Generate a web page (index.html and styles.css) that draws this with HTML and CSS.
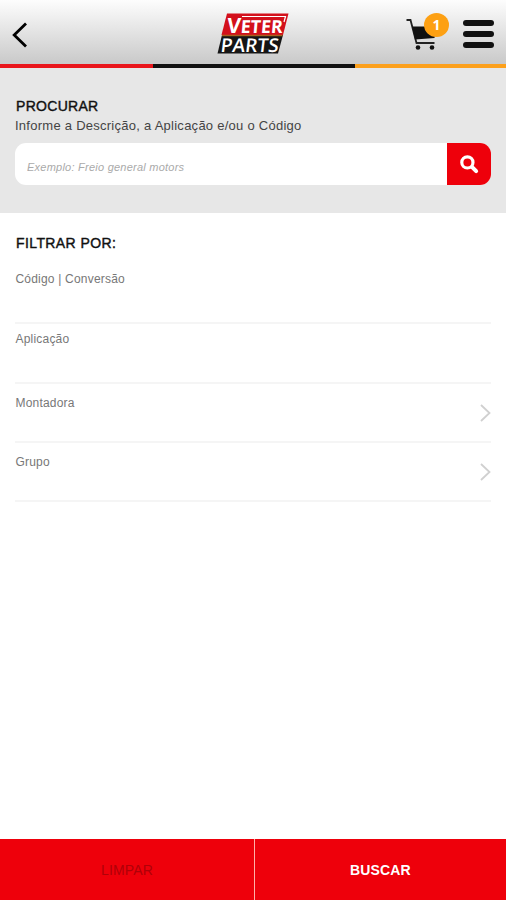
FILE: index.html
```html
<!DOCTYPE html>
<html lang="pt-BR">
<head>
    <meta charset="UTF-8">
    <meta name="viewport" content="width=device-width, initial-scale=1.0">
    <title>Veter Parts</title>
    <link rel="stylesheet" href="styles.css">
</head>
<body>
    <header class="topbar">
        <button type="button" class="back" aria-label="Voltar">
            <svg width="18" height="28" viewBox="0 0 18 28">
                <path d="M15 2.500L3.200 14L15 25.500" fill="none" stroke="#000" stroke-width="2.800"/>
            </svg>
        </button>
        <svg class="logo" width="72" height="42" viewBox="0 0 72 42">
            <path d="M10 0.500H71.500L66 22H4.500Z" fill="#d3101b"/>
            <path d="M5 22H66L61 40.500H0.500Z" fill="#151515"/>
            <path d="M5 22.500H65.500" stroke="#a8601c" stroke-width="1.500"/>
            <path d="M25 3.500H68.500L67 9" fill="none" stroke="#fff" stroke-width="1.200"/>
            <text class="logo-veter" transform="translate(9.500 19.500) skewX(-5)" font-size="18"><tspan font-size="21">V</tspan><tspan textLength="42" lengthAdjust="spacingAndGlyphs">ETER</tspan></text>
            <text class="logo-parts" transform="translate(3 38.500) skewX(-7)" font-size="19" textLength="58" lengthAdjust="spacingAndGlyphs">PARTS</text>
        </svg>
        <div class="actions">
            <button type="button" class="cart" aria-label="Carrinho">
                <svg width="32" height="32" viewBox="0 0 32 32">
                    <path d="M0.500 2H4.500L10.500 25H28.500" fill="none" stroke="#222" stroke-width="1.800"/>
                    <path d="M6 8.500H30L28.500 20L9 21.500Z" fill="#111"/>
                    <circle cx="12" cy="29.500" r="2.300" fill="#111"/>
                    <circle cx="26" cy="29.500" r="2.300" fill="#111"/>
                </svg>
                <span class="badge">1</span>
            </button>
            <button type="button" class="menu" aria-label="Menu">
                <span></span>
                <span></span>
                <span></span>
            </button>
        </div>
    </header>
    <div class="stripes">
        <span class="red"></span>
        <span class="black"></span>
        <span class="orange"></span>
    </div>

    <section class="search">
        <h1>PROCURAR</h1>
        <p>Informe a Descrição, a Aplicação e/ou o Código</p>
        <form class="search-box">
            <input type="text" placeholder="Exemplo: Freio general motors">
            <button type="button" aria-label="Pesquisar">
                <svg width="19" height="19" viewBox="0 0 18 18">
                    <circle cx="7" cy="7" r="5.300" fill="none" stroke="#fff" stroke-width="3"/>
                    <path d="M11.500 11.500L15.300 15.300" stroke="#fff" stroke-width="3.800" stroke-linecap="round"/>
                </svg>
            </button>
        </form>
    </section>

    <section class="filters">
        <h2>FILTRAR POR:</h2>
        <div class="filter codigo">Código | Conversão</div>
        <div class="filter aplicacao">Aplicação</div>
        <div class="filter montadora">
            <span>Montadora</span>
            <svg width="11" height="18" viewBox="0 0 11 18">
                <path d="M1 1L9.500 9L1 17" fill="none" stroke="#d0d0d0" stroke-width="1.800"/>
            </svg>
        </div>
        <div class="filter grupo">
            <span>Grupo</span>
            <svg width="11" height="18" viewBox="0 0 11 18">
                <path d="M1 1L9.500 9L1 17" fill="none" stroke="#d0d0d0" stroke-width="1.800"/>
            </svg>
        </div>
    </section>

    <footer class="bottom">
        <button type="button" class="clear">LIMPAR</button>
        <button type="button" class="submit">BUSCAR</button>
    </footer>
</body>
</html>
```

FILE: styles.css
```css
* {
    box-sizing: border-box;
}
body {
    margin: 0;
    height: 900px;
    display: flex;
    flex-direction: column;
    overflow: hidden;
    background: #fff;
    font-family: "Liberation Sans", Arial, sans-serif;
}
button {
    padding: 0;
    border: 0;
    background: none;
    font-family: inherit;
}
svg {
    display: block;
    overflow: visible;
}
.topbar {
    display: grid;
    grid-template-columns: 1fr 72px 1fr;
    height: 64px;
    padding: 0 12px 0 11px;
    background: linear-gradient(#fdfdfd, #c9c9c9);
}
.back {
    justify-self: start;
    align-self: start;
    margin-top: 21px;
}
.logo {
    margin-top: 13px;
}
.logo-veter {
    fill: #fff;
    font-family: "Open Sans", sans-serif;
    font-weight: bold;
}
.logo-parts {
    fill: #fff;
    font-family: "Open Sans", sans-serif;
    font-weight: 600;
}
.actions {
    display: flex;
    justify-content: flex-end;
    align-items: flex-start;
    gap: 25px;
}
.cart {
    position: relative;
    margin-top: 18px;
}
.badge {
    position: absolute;
    top: -5px;
    left: 18px;
    width: 25px;
    height: 24px;
    border-radius: 50%;
    background: #fda013;
    color: #fff;
    font: bold 14px/24px "Open Sans", sans-serif;
    text-align: center;
}
.menu {
    display: flex;
    flex-direction: column;
    gap: 5px;
    width: 31px;
    margin-top: 20px;
}
.menu span {
    height: 6px;
    border-radius: 3px;
    background: #111;
}
.stripes {
    display: grid;
    grid-template-columns: 153px 202px 1fr;
    height: 4px;
}
.red {
    background: #e9151b;
}
.black {
    background: #111;
}
.orange {
    background: #fca01c;
}
.search {
    height: 145px;
    padding: 30px 15px 0;
    background: #e7e7e7;
}
h1,
h2 {
    margin: 0;
    padding-left: 1px;
    color: #111;
    font-size: 14px;
    font-weight: normal;
    line-height: 16px;
    -webkit-text-stroke: 0.4px #111;
}
h1 {
    letter-spacing: 0.3px;
}
.search p {
    margin: 4px 0 9px;
    color: #444;
    font-size: 13px;
    letter-spacing: 0.26px;
    line-height: 16px;
}
.search-box {
    display: flex;
    height: 42px;
    border-radius: 11px;
    overflow: hidden;
    background: #fff;
}
.search-box input {
    flex: 1;
    min-width: 0;
    padding: 5px 12px 0;
    border: 0;
    background: none;
    font: italic 11px "Liberation Sans", Arial, sans-serif;
    letter-spacing: 0.24px;
}
.search-box input::placeholder {
    color: #aaa;
}
.search-box button {
    display: flex;
    justify-content: center;
    align-items: center;
    width: 44px;
    background: #ee000b;
}
.filters {
    flex: 1;
    padding: 22px 15px 0;
}
.filters h2 {
    letter-spacing: 0.4px;
}
.filter {
    display: flex;
    justify-content: space-between;
    align-items: flex-start;
    padding-left: 0.5px;
    border-bottom: 2px solid #f5f5f5;
    color: #777;
    font-size: 12px;
    letter-spacing: 0.2px;
    line-height: 14px;
}
.codigo {
    height: 52px;
    margin-top: 21px;
}
.aplicacao {
    height: 60px;
    padding-top: 8px;
}
.montadora,
.grupo {
    height: 59px;
    padding-top: 12px;
}
.filter svg {
    margin-top: 8px;
}
.bottom {
    display: grid;
    grid-template-columns: 254px 1fr;
    gap: 1px;
    height: 61px;
    background: #ffb0a8;
}
.bottom button {
    background: #ee000b;
    font-size: 14px;
    letter-spacing: 0.15px;
}
.clear {
    color: #b00008;
}
.bottom .submit {
    color: #fff;
    font-weight: bold;
}
```
